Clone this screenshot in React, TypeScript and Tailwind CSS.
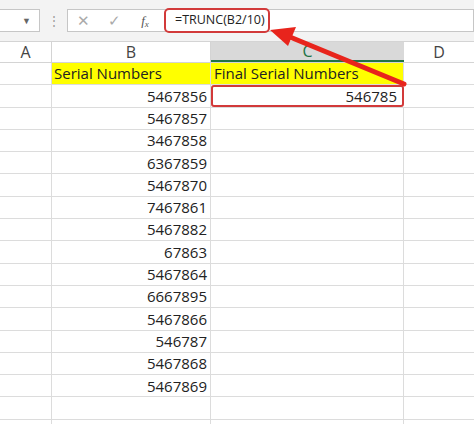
import React from "react";

const nums = ["5467856","5467857","3467858","6367859","5467870","7467861","5467882","67863","5467864","6667895","5467866","546787","5467868","5467869"];

export default function App() {
  const rowH = "h-[22.3px]";
  return (
    <div className="relative w-[474px] h-[424px] bg-white overflow-hidden text-[#222]" style={{ fontFamily: '"Open Sans", "Liberation Sans", sans-serif' }}>
      <div className="h-[42px] bg-[#f3f3f3] border-b border-[#d4d4d4] flex items-center relative">
        <div className="w-[40px] h-[23px] bg-white border border-[#c6c6c6] border-l-0 flex items-center justify-end pr-2 text-[9px] text-[#666]">▼</div>
        <div className="w-[27px] text-center text-[#999] text-[12px] leading-none">⋮</div>
        <div className="flex-1 h-[23px] bg-white border border-[#c6c6c6] flex items-center text-[#aaa]">
          <span className="w-[30px] text-center text-[15px]">✕</span>
          <span className="w-[32px] text-center text-[15px]">✓</span>
          <span className="w-[30px] text-center text-[13px] italic text-[#555]" style={{ fontFamily: '"Liberation Serif", serif' }}>f<sub className="text-[9px]">x</sub></span>
          <div className="ml-[4px] h-[25px] w-[106px] border-2 border-[#d23a3a] rounded-[5px] flex items-center pl-[9px] text-[12.5px] text-[#222]">=TRUNC(B2/10)</div>
        </div>
      </div>
      <div className="flex h-[21px] bg-white text-[16px] text-[#444] border-b border-[#d4d4d4]">
        <div className="w-[52px] flex items-center justify-center border-r border-[#d4d4d4]">A</div>
        <div className="w-[159px] flex items-center justify-center border-r border-[#d4d4d4]">B</div>
        <div className="w-[193px] flex items-center justify-center bg-[#d9d9d9] border-b-2 border-[#217346] text-[#217346]">C</div>
        <div className="flex-1 flex items-center justify-center">D</div>
      </div>
      <div className="flex flex-col text-[15px]">
        {[-1, ...nums.map((_, i) => i), 99, 100].map((k, r) => (
          <div key={r} className={`flex ${rowH} border-b border-[#dcdcdc]`}>
            <div className="w-[52px] border-r border-[#dcdcdc]" />
            <div className={`w-[159px] border-r border-[#dcdcdc] flex items-center ${k === -1 ? "bg-[#ffff00] pl-[2px]" : "justify-end pr-[3px]"}`}>
              {k === -1 ? "Serial Numbers" : k >= 0 && k < 99 ? nums[k] : ""}
            </div>
            <div className={`w-[193px] flex items-center ${k === -1 ? "bg-[#ffff00] pl-[3px] border-r border-[#dcdcdc]" : ""} ${k === 0 ? "justify-end pr-[5px] border-2 border-[#d23a3a] rounded-[3px]" : ""} ${k !== 0 && k !== -1 ? "border-r border-[#dcdcdc]" : ""}`}>
              {k === -1 ? "Final Serial Numbers" : k === 0 ? "546785" : ""}
            </div>
            <div className="flex-1" />
          </div>
        ))}
      </div>
      <svg className="absolute left-0 top-0" width="474" height="424">
        <line x1="404" y1="84" x2="290" y2="37" stroke="#e8241c" strokeWidth="5" strokeLinecap="round" />
        <polygon points="270,30 296,27 288,46" fill="#e8241c" />
      </svg>
    </div>
  );
}
